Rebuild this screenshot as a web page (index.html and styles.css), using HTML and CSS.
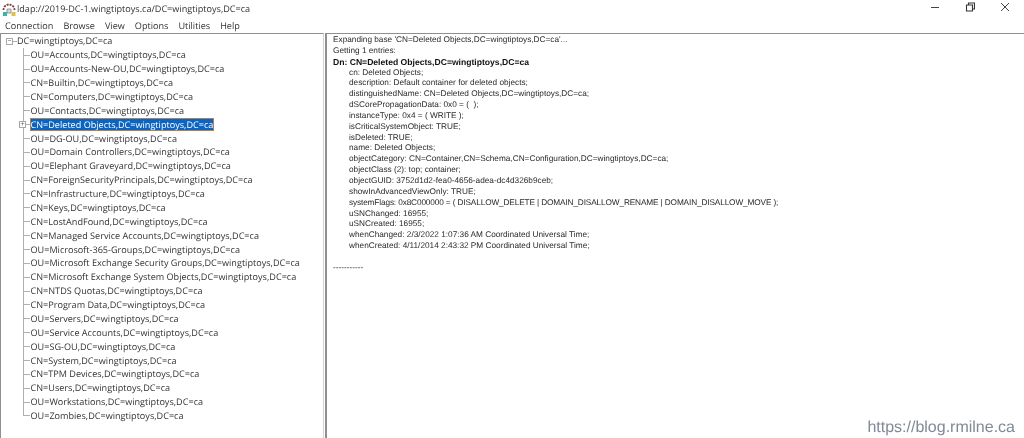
FILE: index.html
```html
<!DOCTYPE html>
<html lang="en">
<head>
<meta charset="utf-8">
<title>ldap</title>
<link rel="stylesheet" href="styles.css">
</head>
<body>
<div class="shot">
<header class="titlebar">
  <svg class="app-icon" viewBox="0 0 16 16" width="16" height="16"><path d="M2.500 9 A5.500 5.500 0 0 1 13.500 9" fill="none" stroke="#7a3c3c" stroke-width="1.800" stroke-dasharray="2 1"/><path d="M6 8h4v4H6z" fill="#dcdcdc" stroke="#666" stroke-width=".6"/><path d="M2 11h4v4H2z" fill="#35b8a8"/><path d="M10.500 11h4v4h-4z" fill="#d9c34a"/></svg>
  <span class="title">ldap://2019-DC-1.wingtiptoys.ca/DC=wingtiptoys,DC=ca</span>
  <div class="controls">
    <svg viewBox="0 0 10 10" width="10" height="10"><path d="M1 5.500h8" stroke="#444" fill="none"/></svg>
    <svg viewBox="0 0 10 10" width="10" height="10"><path d="M1.500 3h6v6h-6zM3.500 3V1h6v6H7.500" stroke="#333" stroke-width="1.100" fill="none"/></svg>
    <svg viewBox="0 0 10 10" width="10" height="10"><path d="M1 1l8 8M9 1l-8 8" stroke="#444" fill="none"/></svg>
  </div>
</header>
<nav class="menubar">
  <span>Connection</span><span>Browse</span><span>View</span><span>Options</span><span>Utilities</span><span>Help</span>
</nav>
<main class="panes">
  <section class="pane tree">
    <div class="root"><span class="box">&minus;</span><span class="stub"></span>DC=wingtiptoys,DC=ca</div>
    <ul class="list">
      <li><span class="conn"></span><span class="label">OU=Accounts,DC=wingtiptoys,DC=ca</span></li>
      <li><span class="conn"></span><span class="label">OU=Accounts-New-OU,DC=wingtiptoys,DC=ca</span></li>
      <li><span class="conn"></span><span class="label">CN=Builtin,DC=wingtiptoys,DC=ca</span></li>
      <li><span class="conn"></span><span class="label">CN=Computers,DC=wingtiptoys,DC=ca</span></li>
      <li><span class="conn"></span><span class="label">OU=Contacts,DC=wingtiptoys,DC=ca</span></li>
      <li><span class="conn"><span class="box expander">+</span></span><span class="label selected">CN=Deleted Objects,DC=wingtiptoys,DC=ca</span></li>
      <li><span class="conn"></span><span class="label">OU=DG-OU,DC=wingtiptoys,DC=ca</span></li>
      <li><span class="conn"></span><span class="label">OU=Domain Controllers,DC=wingtiptoys,DC=ca</span></li>
      <li><span class="conn"></span><span class="label">OU=Elephant Graveyard,DC=wingtiptoys,DC=ca</span></li>
      <li><span class="conn"></span><span class="label">CN=ForeignSecurityPrincipals,DC=wingtiptoys,DC=ca</span></li>
      <li><span class="conn"></span><span class="label">CN=Infrastructure,DC=wingtiptoys,DC=ca</span></li>
      <li><span class="conn"></span><span class="label">CN=Keys,DC=wingtiptoys,DC=ca</span></li>
      <li><span class="conn"></span><span class="label">CN=LostAndFound,DC=wingtiptoys,DC=ca</span></li>
      <li><span class="conn"></span><span class="label">CN=Managed Service Accounts,DC=wingtiptoys,DC=ca</span></li>
      <li><span class="conn"></span><span class="label">OU=Microsoft-365-Groups,DC=wingtiptoys,DC=ca</span></li>
      <li><span class="conn"></span><span class="label">OU=Microsoft Exchange Security Groups,DC=wingtiptoys,DC=ca</span></li>
      <li><span class="conn"></span><span class="label">CN=Microsoft Exchange System Objects,DC=wingtiptoys,DC=ca</span></li>
      <li><span class="conn"></span><span class="label">CN=NTDS Quotas,DC=wingtiptoys,DC=ca</span></li>
      <li><span class="conn"></span><span class="label">CN=Program Data,DC=wingtiptoys,DC=ca</span></li>
      <li><span class="conn"></span><span class="label">OU=Servers,DC=wingtiptoys,DC=ca</span></li>
      <li><span class="conn"></span><span class="label">OU=Service Accounts,DC=wingtiptoys,DC=ca</span></li>
      <li><span class="conn"></span><span class="label">OU=SG-OU,DC=wingtiptoys,DC=ca</span></li>
      <li><span class="conn"></span><span class="label">CN=System,DC=wingtiptoys,DC=ca</span></li>
      <li><span class="conn"></span><span class="label">CN=TPM Devices,DC=wingtiptoys,DC=ca</span></li>
      <li><span class="conn"></span><span class="label">CN=Users,DC=wingtiptoys,DC=ca</span></li>
      <li><span class="conn"></span><span class="label">OU=Workstations,DC=wingtiptoys,DC=ca</span></li>
      <li class="last"><span class="conn"></span><span class="label">OU=Zombies,DC=wingtiptoys,DC=ca</span></li>
    </ul>
  </section>
  <section class="pane output">
    <p>Expanding base 'CN=Deleted Objects,DC=wingtiptoys,DC=ca'...</p>
    <p>Getting 1 entries:</p>
    <p class="dn">Dn: CN=Deleted Objects,DC=wingtiptoys,DC=ca</p>
    <p class="attr">cn: Deleted Objects;</p>
    <p class="attr">description: Default container for deleted objects;</p>
    <p class="attr">distinguishedName: CN=Deleted Objects,DC=wingtiptoys,DC=ca;</p>
    <p class="attr">dSCorePropagationData: 0x0 = (  );</p>
    <p class="attr">instanceType: 0x4 = ( WRITE );</p>
    <p class="attr">isCriticalSystemObject: TRUE;</p>
    <p class="attr">isDeleted: TRUE;</p>
    <p class="attr">name: Deleted Objects;</p>
    <p class="attr">objectCategory: CN=Container,CN=Schema,CN=Configuration,DC=wingtiptoys,DC=ca;</p>
    <p class="attr">objectClass (2): top; container;</p>
    <p class="attr">objectGUID: 3752d1d2-fea0-4656-adea-dc4d326b9ceb;</p>
    <p class="attr">showInAdvancedViewOnly: TRUE;</p>
    <p class="attr flags">systemFlags: 0x8C000000 = ( DISALLOW_DELETE | DOMAIN_DISALLOW_RENAME | DOMAIN_DISALLOW_MOVE );</p>
    <p class="attr">uSNChanged: 16955;</p>
    <p class="attr">uSNCreated: 16955;</p>
    <p class="attr">whenChanged: 2/3/2022 1:07:36 AM Coordinated Universal Time;</p>
    <p class="attr">whenCreated: 4/11/2014 2:43:32 PM Coordinated Universal Time;</p>
    <p>&nbsp;</p>
    <p>-----------</p>
  </section>
  <div class="watermark">https://blog.rmilne.ca</div>
</main>
</div>
</body>
</html>
```
FILE: styles.css
```css
* { box-sizing: border-box; }
html, body { margin: 0; height: 100%; }
body {
  width: 1024px;
  height: 438px;
  overflow: hidden;
  background: #fff;
}
.shot {
  height: 100%;
  display: flex;
  flex-direction: column;
  background: #fff;
  color: #222;
  font-family: "Open Sans", "Noto Sans", sans-serif;
  text-rendering: geometricPrecision;
  filter: blur(0.3px);
}
.titlebar {
  height: 17px;
  display: flex;
  align-items: center;
  padding-left: 1px;
  flex: none;
}
.title { font-size: 9.1px; color: #333; }
.controls {
  margin-left: auto;
  display: flex;
  gap: 25px;
  padding-right: 14px;
  padding-bottom: 3px;
  align-items: center;
}
.menubar {
  height: 16px;
  flex: none;
  display: flex;
  gap: 10px;
  padding-left: 5px;
  align-items: center;
  font-size: 9.1px;
  color: #333;
}
.panes {
  flex: 1;
  position: relative;
  display: flex;
  gap: 1px;
  min-height: 0;
}
.pane {
  border-top: 1px solid #8f8f8f;
  background: #fff;
}
.tree {
  width: 324px;
  flex: none;
  border-left: 1px solid #8f8f8f;
  border-right: 1px solid #d4d4d4;
  padding: 0.4px 0 0 5px;
  font-size: 9.1px;
  color: #333;
  line-height: 13.89px;
  white-space: nowrap;
}
.root {
  height: 13.89px;
  display: flex;
  align-items: center;
}
.box {
  width: 7px;
  height: 7px;
  border: 1px solid #a8a8a8;
  font-size: 7px;
  line-height: 5px;
  text-align: center;
  color: #666;
  flex: none;
  font-family: "Liberation Sans", sans-serif;
  background: #fff;
}
.stub { width: 4px; height: 1px; background: #b0b0b0; flex: none; }
.list {
  list-style: none;
  margin: 0 0 0 17px;
  padding: 0;
}
.list li {
  height: 13.89px;
  display: flex;
  align-items: center;
}
.conn {
  width: 6.500px;
  height: 100%;
  flex: none;
  position: relative;
  background:
    linear-gradient(#b0b0b0, #b0b0b0) 0 0 / 1px 100% no-repeat,
    linear-gradient(#b0b0b0, #b0b0b0) 0 50% / 100% 1px no-repeat;
}
.last .conn {
  background:
    linear-gradient(#b0b0b0, #b0b0b0) 0 0 / 1px 50% no-repeat,
    linear-gradient(#b0b0b0, #b0b0b0) 0 50% / 100% 1px no-repeat;
}
.expander { position: absolute; left: -4px; top: 3px; }
.label { padding: 0 1px; }
.selected {
  background: #0a64c4;
  color: #fff;
  outline: 1px solid #b08050;
  outline-offset: -1px;
  line-height: 13px;
}
.output {
  flex: 1;
  border-left: 2px solid #8f8f8f;
  padding: 1px 0 0 6px;
  font-family: "Liberation Sans", Arial, sans-serif;
  font-size: 8.25px;
  line-height: 10.84px;
  color: #2a2a2a;
}
.output p { margin: 0; white-space: pre; }
.output .dn { font-weight: 700; color: #111; font-size: 8.6px; }
.output .attr { padding-left: 16px; }
.output .flags { letter-spacing: -0.13px; }
.watermark {
  position: absolute;
  right: 9px;
  bottom: 1px;
  font-family: "Liberation Sans", Arial, sans-serif;
  font-size: 16px;
  color: #808a96;
}
```
